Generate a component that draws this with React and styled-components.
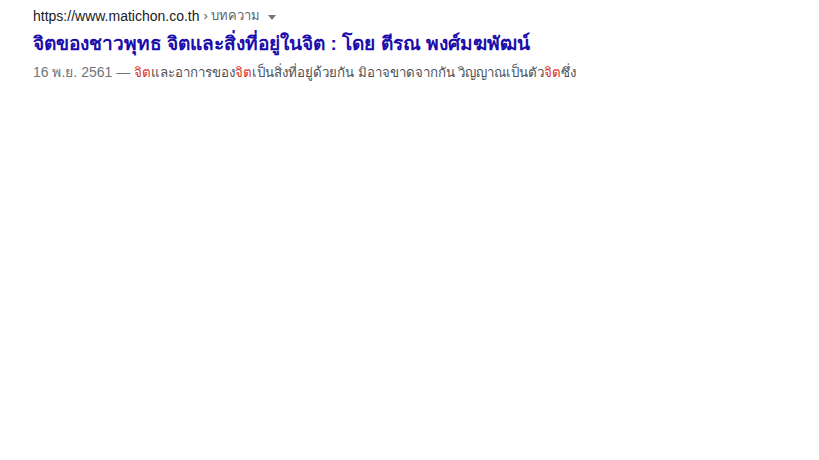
import React from 'react';
import styled, { createGlobalStyle } from 'styled-components';

const GlobalStyle = createGlobalStyle`
  body {
    margin: 0;
    background: #ffffff;
    font-family: "Liberation Sans", Arial, sans-serif;
  }
`;

const Result = styled.div`
  padding: 7px 0 0 33px;
  width: 600px;
`;

const Cite = styled.div`
  display: flex;
  align-items: center;
  font-size: 14px;
  line-height: 18px;
  color: #202124;
  .crumb {
    color: #5f6368;
    margin-left: 4px;
    font-size: 13px;
  }
`;

const Caret = styled.span`
  display: inline-block;
  margin-left: 8px;
  margin-top: 2px;
  width: 0;
  height: 0;
  border-left: 4px solid transparent;
  border-right: 4px solid transparent;
  border-top: 5px solid #70757a;
`;

const Title = styled.h3`
  margin: 6px 0 0 0;
  font-size: 19.1px;
  line-height: 26px;
  font-weight: bold;
  color: #1a0dab;
`;

const Snippet = styled.div`
  margin-top: 4px;
  font-size: 14px;
  line-height: 22px;
  color: #4d5156;
  .date {
    color: #70757a;
  }
  .th {
    font-size: 13.3px;
  }
  em {
    font-style: normal;
    color: #d93025;
  }
`;

const App = () => (
  <>
    <GlobalStyle />
    <Result>
      <Cite>
        https://www.matichon.co.th
        <span className="crumb">› บทความ</span>
        <Caret />
      </Cite>
      <Title>จิตของชาวพุทธ จิตและสิ่งที่อยู่ในจิต : โดย ตีรณ พงศ์มฆพัฒน์</Title>
      <Snippet>
        <span className="date">16 พ.ย. 2561 — </span>
        <span className="th">
          <em>จิต</em>และอาการของ<em>จิต</em>เป็นสิ่งที่อยู่ด้วยกัน มิอาจขาดจากกัน วิญญาณเป็นตัว<em>จิต</em>ซึ่ง
        </span>
      </Snippet>
    </Result>
  </>
);

export default App;
